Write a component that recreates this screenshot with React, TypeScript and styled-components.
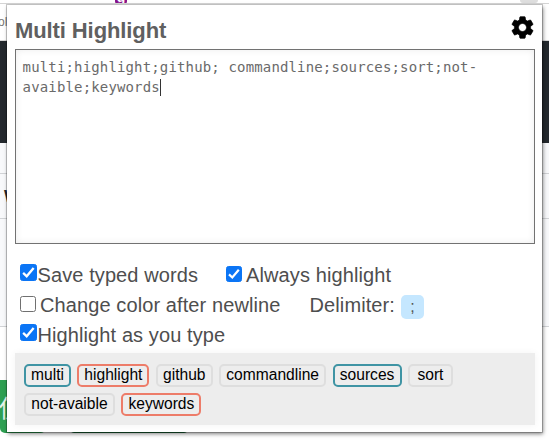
import React from "react";
import styled, { createGlobalStyle } from "styled-components";
import { MdSettings } from "react-icons/md";

const GlobalStyle = createGlobalStyle`
  * { box-sizing: border-box; }
  body { margin: 0; overflow: hidden; background: #fff; }
`;

const Page = styled.main`
  position: relative;
  width: 549px;
  height: 441px;
  overflow: hidden;
  background: #fff;
  font-family: "Liberation Sans", Arial, sans-serif;
`;

const Backdrop = styled.div`
  display: grid;
  grid-template-rows: 4px 37px 102px 31px 45px 108px 53px 53px;
`;

const Band = styled.div<{ $fill?: string; $line?: string }>`
  background: ${(p) => p.$fill ?? "#fff"};
  border-bottom: ${(p) => (p.$line ? `1px solid ${p.$line}` : "none")};
  overflow: hidden;
  white-space: nowrap;
`;

const TopBand = styled(Band)`
  display: flex;
`;

const Marker = styled.span`
  width: 12px;
  height: 4px;
  margin-left: 115px;
  border-radius: 0 0 3px 3px;
  background: #87118a;
  color: #fff;
  font: bold 14px/14px "Liberation Sans", sans-serif;
  overflow: hidden;
  display: flex;
  align-items: flex-end;
  justify-content: center;
`;

const Avatar = styled.span`
  width: 18px;
  height: 3px;
  margin-left: 393px;
  border-radius: 0 0 9px 9px;
  background: #dedede;
`;

const BackText = styled.span<{ $size: number; $top: number; $left: number; $bold?: boolean }>`
  display: block;
  margin: ${(p) => p.$top}px 0 0 ${(p) => p.$left}px;
  font-size: ${(p) => p.$size}px;
  line-height: 1;
  font-weight: ${(p) => (p.$bold ? 700 : 400)};
  color: ${(p) => (p.$bold ? "#24292e" : "#777")};
`;

const ButtonBand = styled(Band)`
  display: flex;
  gap: 23px;
`;

const GreenButton = styled.div<{ $width: number; $dark?: boolean }>`
  width: ${(p) => p.$width}px;
  height: 53px;
  padding: 14px 0 0;
  border-radius: 0 0 5px 5px;
  background: ${(p) => (p.$dark ? "#1b6b38" : "#2ea052")};
  color: #e6f5ea;
  font: 24px/26px "Noto Sans CJK TC", sans-serif;
  text-indent: -1px;
`;

const Popup = styled.section`
  position: absolute;
  top: 5px;
  left: 7px;
  width: 535px;
  height: 427px;
  padding: 0 7px 0 8px;
  background: #fff;
  box-shadow: 0 0 0 1px rgba(0, 0, 0, 0.2), 1px 2px 4px rgba(0, 0, 0, 0.5);
`;

const Header = styled.header`
  display: flex;
  justify-content: space-between;
  height: 44px;
`;

const Title = styled.h1`
  margin: 13px 0 0;
  color: #606060;
  font-size: 22px;
  line-height: 26px;
  letter-spacing: -0.1px;
`;

const SettingsButton = styled.div`
  width: 27px;
  height: 27px;
  margin: 9px -1px 0 0;
  color: #000;
  svg {
    display: block;
    width: 27px;
    height: 27px;
  }
  svg path:last-child {
    stroke: currentColor;
    stroke-width: 0.6;
  }
`;

const WordsBox = styled.div`
  width: 520px;
  height: 195px;
  padding: 7px 6.6px;
  border: 1px solid #727272;
  box-shadow: inset 0 0 7px rgba(0, 0, 0, 0.08);
  color: #6a6a6a;
  font: 14px/20px "DejaVu Sans Mono", monospace;
  letter-spacing: 0.15px;
  white-space: pre;
`;

const Caret = styled.span`
  display: inline-block;
  width: 1px;
  height: 17px;
  vertical-align: -4px;
  background: #333;
`;

const Options = styled.div`
  height: 109px;
  padding: 17px 0 0 5px;
`;

const OptionRow = styled.div`
  display: flex;
  align-items: flex-start;
  height: 30px;
`;

const Option = styled.label<{ $gap: number; $left?: number }>`
  display: flex;
  gap: ${(p) => p.$gap}px;
  margin-left: ${(p) => p.$left ?? 0}px;
  color: #4e4e4e;
  font-size: 20px;
  line-height: 28px;
  letter-spacing: 0.1px;
  white-space: nowrap;
`;

const Check = styled.span<{ $checked?: boolean; $size: number; $top: number }>`
  width: ${(p) => p.$size}px;
  height: ${(p) => p.$size}px;
  margin-top: ${(p) => p.$top}px;
  border: 1px solid ${(p) => (p.$checked ? "#0b75f5" : "#707070")};
  border-radius: 2.5px;
  background: ${(p) => (p.$checked ? "#0b75f5" : "#fff")};
  svg { display: block; width: 100%; height: 100%; }
`;

const Delimiter = styled.span`
  width: 23px;
  height: 24px;
  margin: 4px 0 0 6px;
  border-radius: 5px;
  background: #c5e7ff;
  color: #555;
  font: 16px/24px "Liberation Sans", sans-serif;
  text-align: center;
`;

const TagTray = styled.div`
  display: flex;
  flex-direction: column;
  gap: 6px;
  width: 520px;
  height: 72px;
  padding: 11px 0 0 9px;
  background: #ededed;
  box-shadow: 0 0 7px rgba(0, 0, 0, 0.05);
`;

const TagRow = styled.div`
  display: flex;
  gap: 6.4px;
`;

const tones = { teal: "#3f94a4", coral: "#ed7c69", plain: "#dedede" };

const Tag = styled.span<{ $tone: keyof typeof tones; $width: number }>`
  width: ${(p) => p.$width}px;
  height: 23px;
  border: 2px solid ${(p) => tones[p.$tone]};
  border-radius: 5px;
  color: #000;
  font-size: 15.6px;
  line-height: 18px;
  text-align: center;
  white-space: nowrap;
`;

type TagData = { text: string; tone: keyof typeof tones; width: number };

const tagRows: TagData[][] = [
  [
    { text: "multi", tone: "teal", width: 47 },
    { text: "highlight", tone: "coral", width: 72 },
    { text: "github", tone: "plain", width: 57 },
    { text: "commandline", tone: "plain", width: 107 },
    { text: "sources", tone: "teal", width: 69 },
    { text: "sort", tone: "plain", width: 45 },
  ],
  [
    { text: "not-avaible", tone: "plain", width: 91 },
    { text: "keywords", tone: "coral", width: 80 },
  ],
];

function Checkbox({ checked, size = 16, top = 5 }: { checked?: boolean; size?: number; top?: number }) {
  return (
    <Check $checked={checked} $size={size} $top={top}>
      {checked && (
        <svg viewBox="0 0 14 14" fill="none" stroke="#fff" strokeWidth="2.2">
          <path d="M2 7.4 5.3 10.5 11.8 2.8" />
        </svg>
      )}
    </Check>
  );
}

export default function App() {
  return (
    <Page>
      <GlobalStyle />
      <Backdrop>
        <TopBand $line="#d4d4d4">
          <Marker>g</Marker>
          <Avatar />
        </TopBand>
        <Band $line="#d9d9d9">
          <BackText $size={12} $top={12} $left={-2}>ol</BackText>
        </Band>
        <Band $fill="#24292e" />
        <Band $fill="#f8f9fb" $line="#d1d3d6" />
        <Band $fill="#f8f9fb" $line="#d1d3d6">
          <BackText $size={17} $top={14} $left={4} $bold>W</BackText>
        </Band>
        <Band $fill="#f8f9fb" $line="#d1d3d6" />
        <Band />
        <ButtonBand>
          <GreenButton $width={46}>使</GreenButton>
          <GreenButton $width={120} $dark />
        </ButtonBand>
      </Backdrop>

      <Popup>
        <Header>
          <Title>Multi Highlight</Title>
          <SettingsButton><MdSettings /></SettingsButton>
        </Header>
        <WordsBox>
          {"multi;highlight;github; commandline;sources;sort;not-\navaible;keywords"}
          <Caret />
        </WordsBox>
        <Options>
          <OptionRow>
            <Option $gap={0.5}><Checkbox checked size={17} top={3} />Save typed words</Option>
            <Option $gap={4} $left={28}><Checkbox checked />Always highlight</Option>
          </OptionRow>
          <OptionRow>
            <Option $gap={4}><Checkbox />Change color after newline</Option>
            <Option $gap={0} $left={29}>Delimiter:</Option>
            <Delimiter>;</Delimiter>
          </OptionRow>
          <OptionRow>
            <Option $gap={0.5}><Checkbox checked size={17} top={3} />Highlight as you type</Option>
          </OptionRow>
        </Options>
        <TagTray>
          {tagRows.map((row, i) => (
            <TagRow key={i}>
              {row.map((tag) => (
                <Tag key={tag.text} $tone={tag.tone} $width={tag.width}>{tag.text}</Tag>
              ))}
            </TagRow>
          ))}
        </TagTray>
      </Popup>
    </Page>
  );
}
